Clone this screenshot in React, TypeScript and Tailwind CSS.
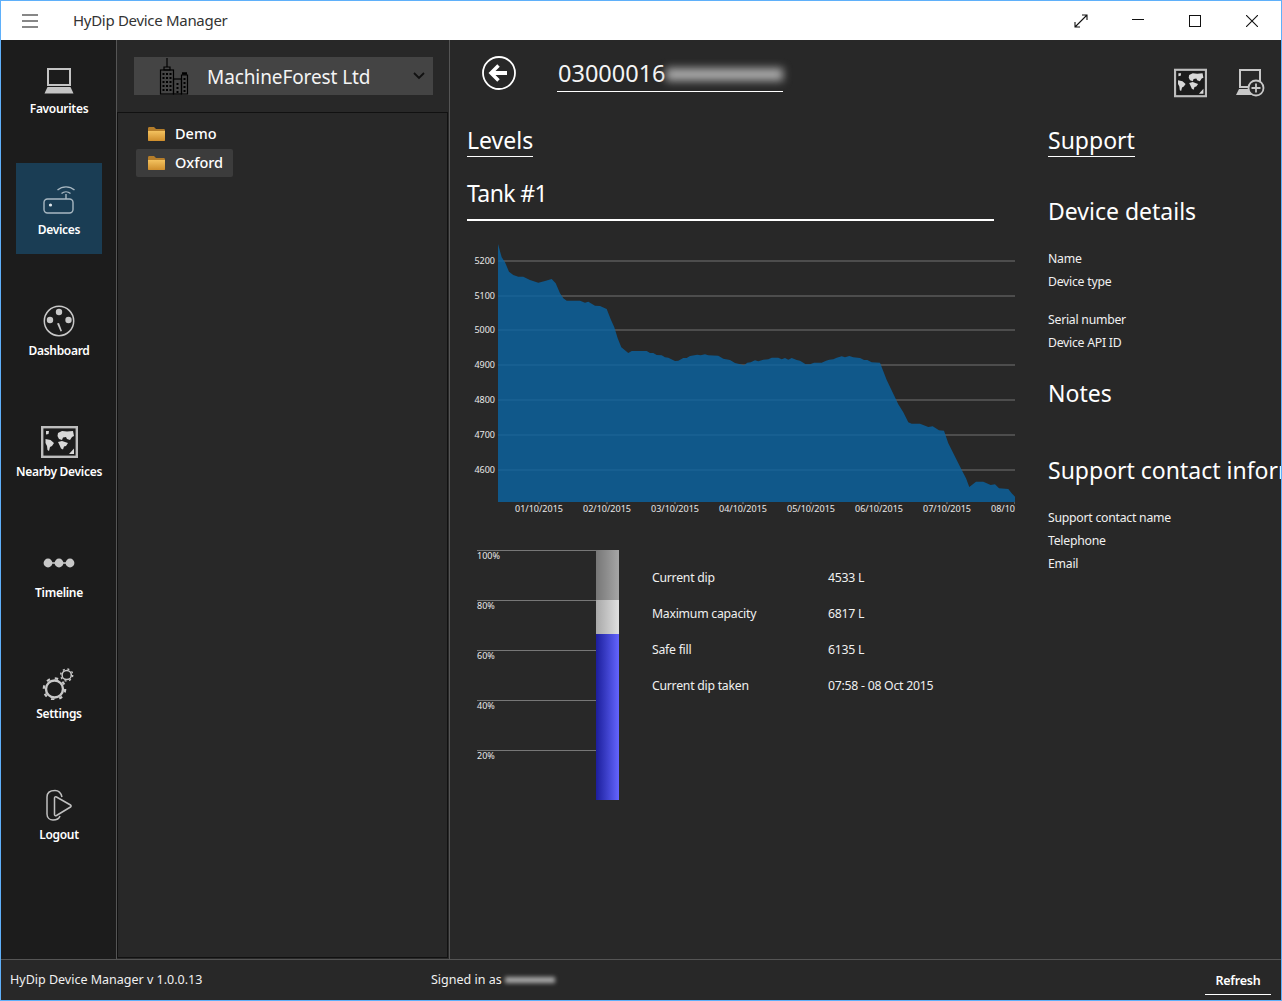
import type { ReactNode } from 'react';

// chart outline read off the reference, in page pixels offset to the svg origin (467,235)
const left = [[114,42],[125,82],[135,97],[147,125],[160,135],[175,140],[190,140],[210,150],[235,158],[255,153],[275,147],[287,160],[300,190],[310,205],[320,212],[360,212],[375,218],[385,215],[405,227],[420,228],[440,237],[452,268],[463,292],[473,325],[484,352],[505,369],[515,363],[560,363],[570,369],[580,369],[590,375],[605,376],[615,382],[625,383],[645,393],[655,392],[670,384],[680,384],[690,378],[712,374],[722,376],[735,373],[745,376],[775,377],[790,386],[810,390],[825,399],[850,405]];
const right = [[12,406],[22,398],[32,397],[45,391],[55,394],[70,389],[85,388],[95,383],[115,383],[125,388],[135,384],[145,389],[155,384],[170,390],[180,392],[197,403],[210,403],[222,398],[245,398],[258,392],[268,389],[280,388],[290,383],[305,379],[315,382],[328,378],[340,382],[360,384],[372,390],[382,390],[395,397],[420,398],[440,450],[475,523],[490,547],[505,577],[515,581],[540,581],[565,591],[578,589],[597,601],[612,602],[625,640],[665,720],[678,745],[688,771],[708,755],[730,755],[752,765],[765,763],[777,775],[805,777],[815,790],[825,800]];
const outline = [
  ...left.map(([x, y]) => [460 + x / 3 - 467, 230 + y / 3 - 235]),
  ...right.map(([x, y]) => [740 + x / 3 - 467, 230 + y / 3 - 235]),
  [548, 267],
  [31, 267],
].map(p => p.map(n => n.toFixed(1)).join(',')).join(' ');

const yTicks = [
  { label: '5200', y: 26 },
  { label: '5100', y: 61 },
  { label: '5000', y: 95 },
  { label: '4900', y: 130 },
  { label: '4800', y: 165 },
  { label: '4700', y: 200 },
  { label: '4600', y: 235 },
];
const xTicks = [
  { label: '01/10/2015', x: 72 },
  { label: '02/10/2015', x: 140 },
  { label: '03/10/2015', x: 208 },
  { label: '04/10/2015', x: 276 },
  { label: '05/10/2015', x: 344 },
  { label: '06/10/2015', x: 412 },
  { label: '07/10/2015', x: 480 },
  { label: '08/10/2015', x: 548 },
];

function World({ className }: { className: string }) {
  return (
    <svg viewBox="0 0 37 32" className={className}>
      <rect x="1.2" y="1.2" width="34.6" height="29.6" fill="#1c1c1c" stroke="#bdbdbd" strokeWidth="2.4" />
      <g fill="#d8d8d8">
        <path d="M5 5h3l-.5 3-2.500.5z" />
        <path d="M4.500 13l5 1 3.500 3-2 3-2 1-1 4-1.500-1-.5-4-1.500-3z" />
        <path d="M17 7l4-2 5 .5 6-.5 1 5-2 1-2 3-3-1-1-2-3 .5-1 2.500-3-1-1.500-3z" />
        <path d="M17 16l4-1 3 1 3 1-2 3-2 .5-1 3-2-1-1.500-3.500z" />
        <path d="M33 22.500v5.500h-5z" />
      </g>
    </svg>
  );
}

function Laptop() {
  return (
    <svg viewBox="0 0 32 28" className="w-8 h-7">
      <rect x="5" y="2" width="22" height="16" fill="none" stroke="#c4c4c4" strokeWidth="2" />
      <path d="M4.500 20h23l3 6.500h-29z" fill="#c4c4c4" />
    </svg>
  );
}

function Router() {
  return (
    <svg viewBox="0 0 32 28" className="w-8 h-7 mb-[2px]" fill="none" stroke="#a9b8c2" strokeWidth="1.400">
      <rect x="1" y="13" width="29" height="14" rx="3.500" />
      <circle cx="7.500" cy="19" r="1.600" fill="#dfe6ea" stroke="none" />
      <path d="M23 13V8" />
      <path d="M18.500 7.500a7 7 0 0 1 9 0" />
      <path d="M14.500 4a13 13 0 0 1 17 0" />
    </svg>
  );
}

function Gauge() {
  return (
    <svg viewBox="0 0 32 32" className="w-8 h-8">
      <circle cx="16" cy="16" r="14.700" fill="none" stroke="#c8c8c8" strokeWidth="1.500" />
      <circle cx="16" cy="7" r="3.200" fill="#c8c8c8" />
      <circle cx="7" cy="15" r="3.200" fill="#c8c8c8" />
      <circle cx="25.500" cy="15" r="3.200" fill="#c8c8c8" />
      <path d="M14 18.500l2-.5 3 8-1.500.5z" fill="#c8c8c8" />
    </svg>
  );
}

function Dots() {
  return (
    <svg viewBox="0 0 32 10" className="w-8 h-2.5">
      <path d="M5 5h22" stroke="#c8c8c8" strokeWidth="1.500" />
      <circle cx="5" cy="5" r="4.400" fill="#c8c8c8" />
      <circle cx="16" cy="5" r="4.400" fill="#c8c8c8" />
      <circle cx="27" cy="5" r="4.400" fill="#c8c8c8" />
    </svg>
  );
}

function Gears() {
  return (
    <svg viewBox="0 0 34 34" className="w-[34px] h-[34px]" fill="none" stroke="#c8c8c8">
      <circle cx="12.500" cy="23" r="8.500" strokeWidth="2.400" />
      <circle cx="12.500" cy="23" r="10.700" strokeWidth="2.200" strokeDasharray="3.400 5" />
      <circle cx="24.700" cy="9" r="4.600" strokeWidth="1.500" />
      <circle cx="24.700" cy="9" r="6" strokeWidth="1.400" strokeDasharray="2 2.710" />
    </svg>
  );
}

function Logout() {
  return (
    <svg viewBox="0 0 28 32" className="w-7 h-8" fill="none" stroke="#c0c0c0" strokeWidth="1.500">
      <path d="M17 8C16 4 13 1.500 10 1.500C5 1.500 2 4 2 8V25C2 29 5 31 8 31C11 31 14 30 15 27" />
      <path d="M9.500 9C9.500 8 10.500 7.500 11.500 8L25.500 16C26.300 16.500 26.300 17.500 25.500 18L11.500 26.500C10.500 27 9.500 26.500 9.500 25.500z" />
    </svg>
  );
}

function Building() {
  return (
    <svg viewBox="0 0 30 38" className="w-[30px] h-[38px] ml-[25px] mr-[18px]" fill="none" stroke="#000" strokeWidth="1.200">
      <path d="M8 1v9" />
      <path d="M5 10h6v3H5z" />
      <rect x="1.500" y="13" width="13" height="24" />
      <rect x="14.500" y="22" width="8" height="15" />
      <path d="M22.500 37V18h6v19z" />
      <path d="M23 16.500h5" strokeWidth="2.500" />
      <g stroke="none" fill="#000">
        {[16, 20, 24, 28, 32].map(y => [3.5, 7, 10.5].map(x => <rect key={`${x}-${y}`} x={x} y={y} width="2" height="2" />))}
        {[26, 30, 34].map(y => <rect key={y} x="17.500" y={y} width="2" height="2" />)}
        {[21, 25, 29, 33].map(y => <rect key={y} x="24.500" y={y} width="2" height="2" />)}
      </g>
    </svg>
  );
}

function Folder() {
  return (
    <svg viewBox="0 0 17 14" className="w-[17px] h-3.5 shrink-0">
      <defs>
        <linearGradient id="folder" x1="0" y1="0" x2="0" y2="1">
          <stop offset="0" stopColor="#f3c25f" />
          <stop offset="1" stopColor="#cf8e2c" />
        </linearGradient>
      </defs>
      <path d="M0 1.500C0 .5.500 0 1.500 0H6l2 2h7.500c1 0 1.500.5 1.500 1.500V12.500c0 1-.5 1.500-1.500 1.500h-14C.5 14 0 13.500 0 12.500z" fill="#b47d2a" />
      <path d="M0 4h17v8.500c0 1-.5 1.500-1.500 1.500h-14C.5 14 0 13.500 0 12.500z" fill="url(#folder)" />
    </svg>
  );
}

function NavItem({ icon, label, active }: { icon: ReactNode; label: string; active?: boolean }) {
  return (
    <div className={`w-[86px] h-[91px] mb-[30px] flex flex-col items-center ${active ? 'bg-[#1a3d54]' : ''}`}>
      <div className="h-[58px] flex items-end justify-center pb-[5px] shrink-0">{icon}</div>
      <div className="mt-[1px] text-[12px] leading-[16px] font-semibold text-white tracking-[-0.3px] whitespace-nowrap">{label}</div>
    </div>
  );
}

function InfoLine({ className, children }: { className: string; children: ReactNode }) {
  return <div className={`text-[12.25px] tracking-[-0.25px] leading-[20px] whitespace-nowrap text-[#f0f0f0] ${className}`}>{children}</div>;
}

function Heading({ className, children }: { className: string; children: ReactNode }) {
  return <div className={`text-[23px] leading-[30px] whitespace-nowrap text-white ${className}`}>{children}</div>;
}

function App() {
  return (
    <div className="w-[1282px] h-[1001px] flex flex-col overflow-hidden border border-[#5fb0fa] bg-[#282828] text-white font-['Noto_Sans',sans-serif]">
      {/* Title bar */}
      <div className="h-[39px] shrink-0 bg-white flex items-center text-black">
        <svg viewBox="0 0 16 14" className="w-4 h-3.5 ml-[21px]" stroke="#111" strokeWidth="1.200">
          <path d="M0 1h16M0 7h16M0 13h16" />
        </svg>
        <div className="ml-[35px] text-[15px] text-[#333] tracking-[-0.3px]">HyDip Device Manager</div>
        <div className="ml-auto flex items-center">
          <svg viewBox="0 0 14 14" className="w-3.5 h-3.5 mr-[44px]" fill="none" stroke="#111" strokeWidth="1.100">
            <path d="M1 13L13 1M8 1h5v5M1 8v5h5" />
          </svg>
          <div className="w-3 h-px bg-[#111] mr-[45px] mb-[2px]" />
          <div className="w-3 h-3 border border-[#111] mr-[45px]" />
          <svg viewBox="0 0 12 12" className="w-3 h-3 mr-[23px]" stroke="#111" strokeWidth="1.100">
            <path d="M0 0l12 12M12 0L0 12" />
          </svg>
        </div>
      </div>

      <div className="flex-1 min-h-0 flex">
        {/* Left rail */}
        <div className="w-[116px] shrink-0 bg-[#1c1c1c] border-r border-[#555] pl-[15px] pt-[2px]">
          <NavItem icon={<Laptop />} label="Favourites" />
          <NavItem icon={<Router />} label="Devices" active />
          <NavItem icon={<Gauge />} label="Dashboard" />
          <NavItem icon={<World className="w-[37px] h-8" />} label="Nearby Devices" />
          <NavItem icon={<div className="pb-[11px]"><Dots /></div>} label="Timeline" />
          <NavItem icon={<Gears />} label="Settings" />
          <NavItem icon={<Logout />} label="Logout" />
        </div>

        {/* Customer and folder tree */}
        <div className="w-[333px] shrink-0 border-r border-[#555] flex flex-col">
          <div className="h-[72px] shrink-0 pt-[17px] pl-[17px]">
            <div className="w-[299px] h-[38px] bg-[#444] flex items-center">
              <Building />
              <div className="text-[19px] tracking-[-0.1px] text-[#f4f4f4] pt-[2px]">MachineForest Ltd</div>
              <svg viewBox="0 0 12 8" className="w-3 h-2 ml-auto mr-2" fill="none" stroke="#111" strokeWidth="1.800">
                <path d="M1 1l5 5 5-5" />
              </svg>
            </div>
          </div>
          <div className="flex-1 border border-[#111] pt-[7px] pl-[18px] mb-[1px] mr-[1px]">
            <div className="h-[28px] w-[97px] flex items-center pl-[12px] gap-[10px] text-[14.5px] font-medium">
              <Folder />
              Demo
            </div>
            <div className="h-[28px] mt-[1px] w-[97px] flex items-center pl-[12px] gap-[10px] text-[14.5px] font-medium bg-[#3c3c3c] rounded-[2px]">
              <Folder />
              Oxford
            </div>
          </div>
        </div>

        {/* Device page */}
        <div className="flex-1 min-w-0 overflow-hidden">
          <div className="h-[86px] flex items-start">
            <svg viewBox="0 0 34 34" className="w-[34px] h-[34px] ml-[32px] mt-[16px]" fill="none" stroke="#fff">
              <circle cx="17" cy="17" r="16" strokeWidth="1.800" />
              <path d="M9 17h16" strokeWidth="4" />
              <path d="M16.500 9.500L9 17l7.500 7.500" strokeWidth="3.500" />
            </svg>
            <div className="ml-[41px] mt-[16px] w-[226px] h-[36px] border-b border-white flex items-center">
              <span className="text-[23.5px] text-[#f4f4f4] pl-[1px] pt-[1px]">03000016</span>
              <div className="w-[118px] h-[13px] mt-[1px] bg-[#a8a8a8] blur-[4px]" />
            </div>
            <div className="ml-auto flex items-start">
              <World className="w-[33px] h-[30px] mt-[28px] mr-[29px]" />
              <svg viewBox="0 0 30 28" className="w-[30px] h-7 mt-[29px] mr-[15px]" fill="none" stroke="#c8c8c8">
                <rect x="4" y="1" width="20" height="17" strokeWidth="2" />
                <path d="M3 20h14v6H0z" fill="#c8c8c8" stroke="none" />
                <circle cx="20" cy="19" r="7.500" fill="#282828" strokeWidth="1.800" />
                <path d="M15.500 19h9M20 14.500v9" strokeWidth="1.800" />
              </svg>
            </div>
          </div>

          <div className="flex pl-[17px]">
            {/* Levels column */}
            <div className="w-[548px] shrink-0">
              <Heading className="inline-block border-b border-white pb-[2px] !leading-[28px]">Levels</Heading>
              <Heading className="mt-[21px] w-[527px] border-b-2 border-white pb-[11px] tracking-[-0.6px]">Tank #1</Heading>
              <svg viewBox="0 0 548 285" className="w-[548px] h-[285px] mt-[14px] font-['Noto_Sans',sans-serif]">
                {yTicks.map(t => (
                  <g key={t.label}>
                    <path d={`M31 ${t.y}H548`} stroke="#5a5a5a" strokeWidth="1.500" />
                    <text x="28" y={t.y + 2.5} textAnchor="end" fontSize="9" fill="#e8e8e8">{t.label}</text>
                  </g>
                ))}
                <polygon points={outline} fill="#0a64a2" fillOpacity="0.8" />
                {xTicks.map(t => (
                  <g key={t.label}>
                    <path d={`M${t.x} 267v2`} stroke="#888" />
                    <text x={t.x} y="277" textAnchor="middle" fontSize="9" fill="#e8e8e8">{t.label}</text>
                  </g>
                ))}
              </svg>

              <div className="flex mt-[30px] pl-[10px]">
                <div className="w-[119px] shrink-0">
                  {['100%', '80%', '60%', '40%', '20%'].map(p => (
                    <div key={p} className="h-[50px] border-t border-[#777] text-[9px] leading-[10px] text-[#e8e8e8]">{p}</div>
                  ))}
                </div>
                <div className="w-[23px] h-[250px] shrink-0 flex flex-col">
                  <div className="h-[50px] bg-gradient-to-r from-[#777] to-[#a6a6a6]" />
                  <div className="h-[34px] bg-gradient-to-r from-[#a8a8a8] to-[#e0e0e0]" />
                  <div className="flex-1 bg-gradient-to-r from-[#1d1d9c] to-[#6464ff]" />
                </div>
                <div className="ml-[33px] mt-[10px] text-[12.25px] tracking-[-0.25px] text-[#f0f0f0]">
                  {[
                    ['Current dip', '4533 L'],
                    ['Maximum capacity', '6817 L'],
                    ['Safe fill', '6135 L'],
                    ['Current dip taken', '07:58 - 08 Oct 2015'],
                  ].map(([k, v]) => (
                    <div key={k} className="h-9 flex items-center whitespace-nowrap">
                      <div className="w-[176px]">{k}</div>
                      <div>{v}</div>
                    </div>
                  ))}
                </div>
              </div>
            </div>

            {/* Support column */}
            <div className="ml-[33px] shrink-0">
              <Heading className="inline-block border-b border-white pb-[2px] !leading-[28px]">Support</Heading>
              <Heading className="mt-[39px]">Device details</Heading>
              <InfoLine className="mt-[23px]">Name</InfoLine>
              <InfoLine className="mt-[3px]">Device type</InfoLine>
              <InfoLine className="mt-[18px]">Serial number</InfoLine>
              <InfoLine className="mt-[3px]">Device API ID</InfoLine>
              <Heading className="mt-[25px]">Notes</Heading>
              <Heading className="mt-[47px]">Support contact information</Heading>
              <InfoLine className="mt-[23px]">Support contact name</InfoLine>
              <InfoLine className="mt-[3px]">Telephone</InfoLine>
              <InfoLine className="mt-[3px]">Email</InfoLine>
            </div>
          </div>
        </div>
      </div>

      {/* Status bar */}
      <div className="h-[41px] shrink-0 border-t border-[#555] flex items-center text-[12.5px] text-[#f0f0f0]">
        <div className="ml-[9px] w-[421px]">HyDip Device Manager v 1.0.0.13</div>
        <div>Signed in as</div>
        <div className="ml-[3px] w-[50px] h-[6px] bg-[#aaa] blur-[2px]" />
        <div className="ml-auto mr-[10px] w-[66px] h-[26px] mt-[3px] border-b border-white text-center leading-[24px] font-semibold tracking-[-0.2px] text-white">Refresh</div>
      </div>
    </div>
  );
}

export default App;
